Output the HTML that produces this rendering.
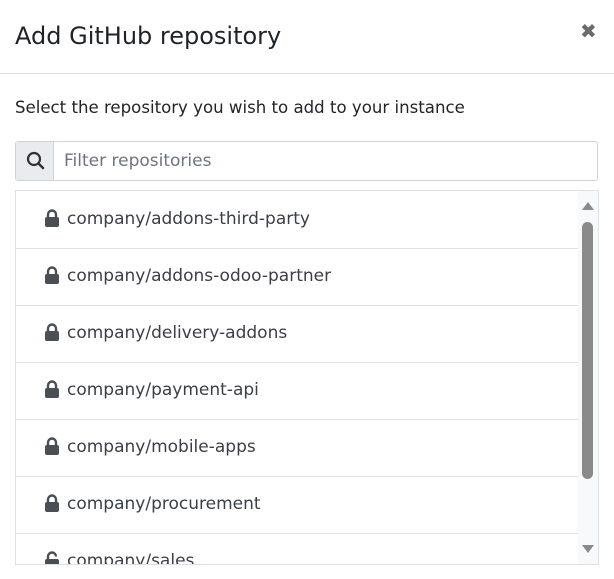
<!DOCTYPE html><html><head><style>
body{margin:0;width:614px;height:579px;background:#fff;font-family:"DejaVu Sans","Liberation Sans",sans-serif;color:#374151;position:relative;overflow:hidden}
.t{position:absolute;left:15px;top:22px;font-size:24px;color:#1f2328}
.x{position:absolute;left:580px;top:19px;font-size:20px;color:#6b6b6b;font-weight:bold}
.hr{position:absolute;left:0;top:73px;width:614px;height:1px;background:#dee2e6}
.s{position:absolute;left:15px;top:98px;font-size:16.6px;color:#212529}
.in{position:absolute;left:15px;top:141px;width:581px;height:38px;border:1px solid #ced4da;border-radius:3px;box-sizing:content-box}
.ib{position:absolute;left:0;top:0;width:37px;height:38px;background:#e9ecef;border-right:1px solid #ced4da}
.ph{position:absolute;left:48px;top:9px;font-size:17px;color:#6c757d}
.box{position:absolute;left:15px;top:190px;width:582px;height:373px;border:1px solid #dee2e6;overflow:hidden}
.row{position:absolute;left:0;width:562px;height:57px;border-bottom:1px solid #dee2e6}
.row span{position:absolute;left:51px;top:18px;font-size:17px;color:#3a3f47}
.row svg{position:absolute;left:28px;top:18px}
.sb{position:absolute;left:562px;top:0;width:20px;height:373px;background:#f8f9fa}
.th{position:absolute;left:4px;top:31px;width:11px;height:257px;background:#8a8a8a;border-radius:6px}
</style></head><body>
<div class="t">Add GitHub repository</div>
<div class="x">✖</div>
<div class="hr"></div>
<div class="s">Select the repository you wish to add to your instance</div>
<div class="in"><div class="ib"><svg width="38" height="38" viewBox="0 0 38 38"><circle cx="18" cy="17" r="6" fill="none" stroke="#333" stroke-width="2.2"/><line x1="22.5" y1="21.5" x2="27" y2="26" stroke="#333" stroke-width="2.6" stroke-linecap="round"/></svg></div><div class="ph">Filter repositories</div></div>
<div class="box">
<div class="row" style="top:0"><svg width="16" height="18" viewBox="0 0 16 18"><path d="M4 8V5.5a4 4 0 0 1 8 0V8" fill="none" stroke="#4a4e55" stroke-width="2.4"/><rect x="1" y="8" width="14" height="10" rx="2" fill="#4a4e55"/></svg><span>company/addons-third-party</span></div>
<div class="row" style="top:57px"><svg width="16" height="18" viewBox="0 0 16 18"><path d="M4 8V5.5a4 4 0 0 1 8 0V8" fill="none" stroke="#4a4e55" stroke-width="2.4"/><rect x="1" y="8" width="14" height="10" rx="2" fill="#4a4e55"/></svg><span>company/addons-odoo-partner</span></div>
<div class="row" style="top:114px"><svg width="16" height="18" viewBox="0 0 16 18"><path d="M4 8V5.5a4 4 0 0 1 8 0V8" fill="none" stroke="#4a4e55" stroke-width="2.4"/><rect x="1" y="8" width="14" height="10" rx="2" fill="#4a4e55"/></svg><span>company/delivery-addons</span></div>
<div class="row" style="top:171px"><svg width="16" height="18" viewBox="0 0 16 18"><path d="M4 8V5.5a4 4 0 0 1 8 0V8" fill="none" stroke="#4a4e55" stroke-width="2.4"/><rect x="1" y="8" width="14" height="10" rx="2" fill="#4a4e55"/></svg><span>company/payment-api</span></div>
<div class="row" style="top:228px"><svg width="16" height="18" viewBox="0 0 16 18"><path d="M4 8V5.5a4 4 0 0 1 8 0V8" fill="none" stroke="#4a4e55" stroke-width="2.4"/><rect x="1" y="8" width="14" height="10" rx="2" fill="#4a4e55"/></svg><span>company/mobile-apps</span></div>
<div class="row" style="top:285px"><svg width="16" height="18" viewBox="0 0 16 18"><path d="M4 8V5.5a4 4 0 0 1 8 0V8" fill="none" stroke="#4a4e55" stroke-width="2.4"/><rect x="1" y="8" width="14" height="10" rx="2" fill="#4a4e55"/></svg><span>company/procurement</span></div>
<div class="row" style="top:342px"><svg width="16" height="18" viewBox="0 0 16 18"><path d="M4 8V5.5a4 4 0 0 1 8 0" fill="none" stroke="#4a4e55" stroke-width="2.4"/><rect x="1" y="8" width="14" height="10" rx="2" fill="#4a4e55"/></svg><span>company/sales</span></div>
<div class="sb"><svg style="position:absolute;left:4px;top:10px" width="12" height="9"><path d="M0 9L6 1L12 9Z" fill="#8a8a8a"/></svg><div class="th"></div><svg style="position:absolute;left:4px;top:354px" width="12" height="9"><path d="M0 0L6 8L12 0Z" fill="#8a8a8a"/></svg></div>
</div>
</body></html>
